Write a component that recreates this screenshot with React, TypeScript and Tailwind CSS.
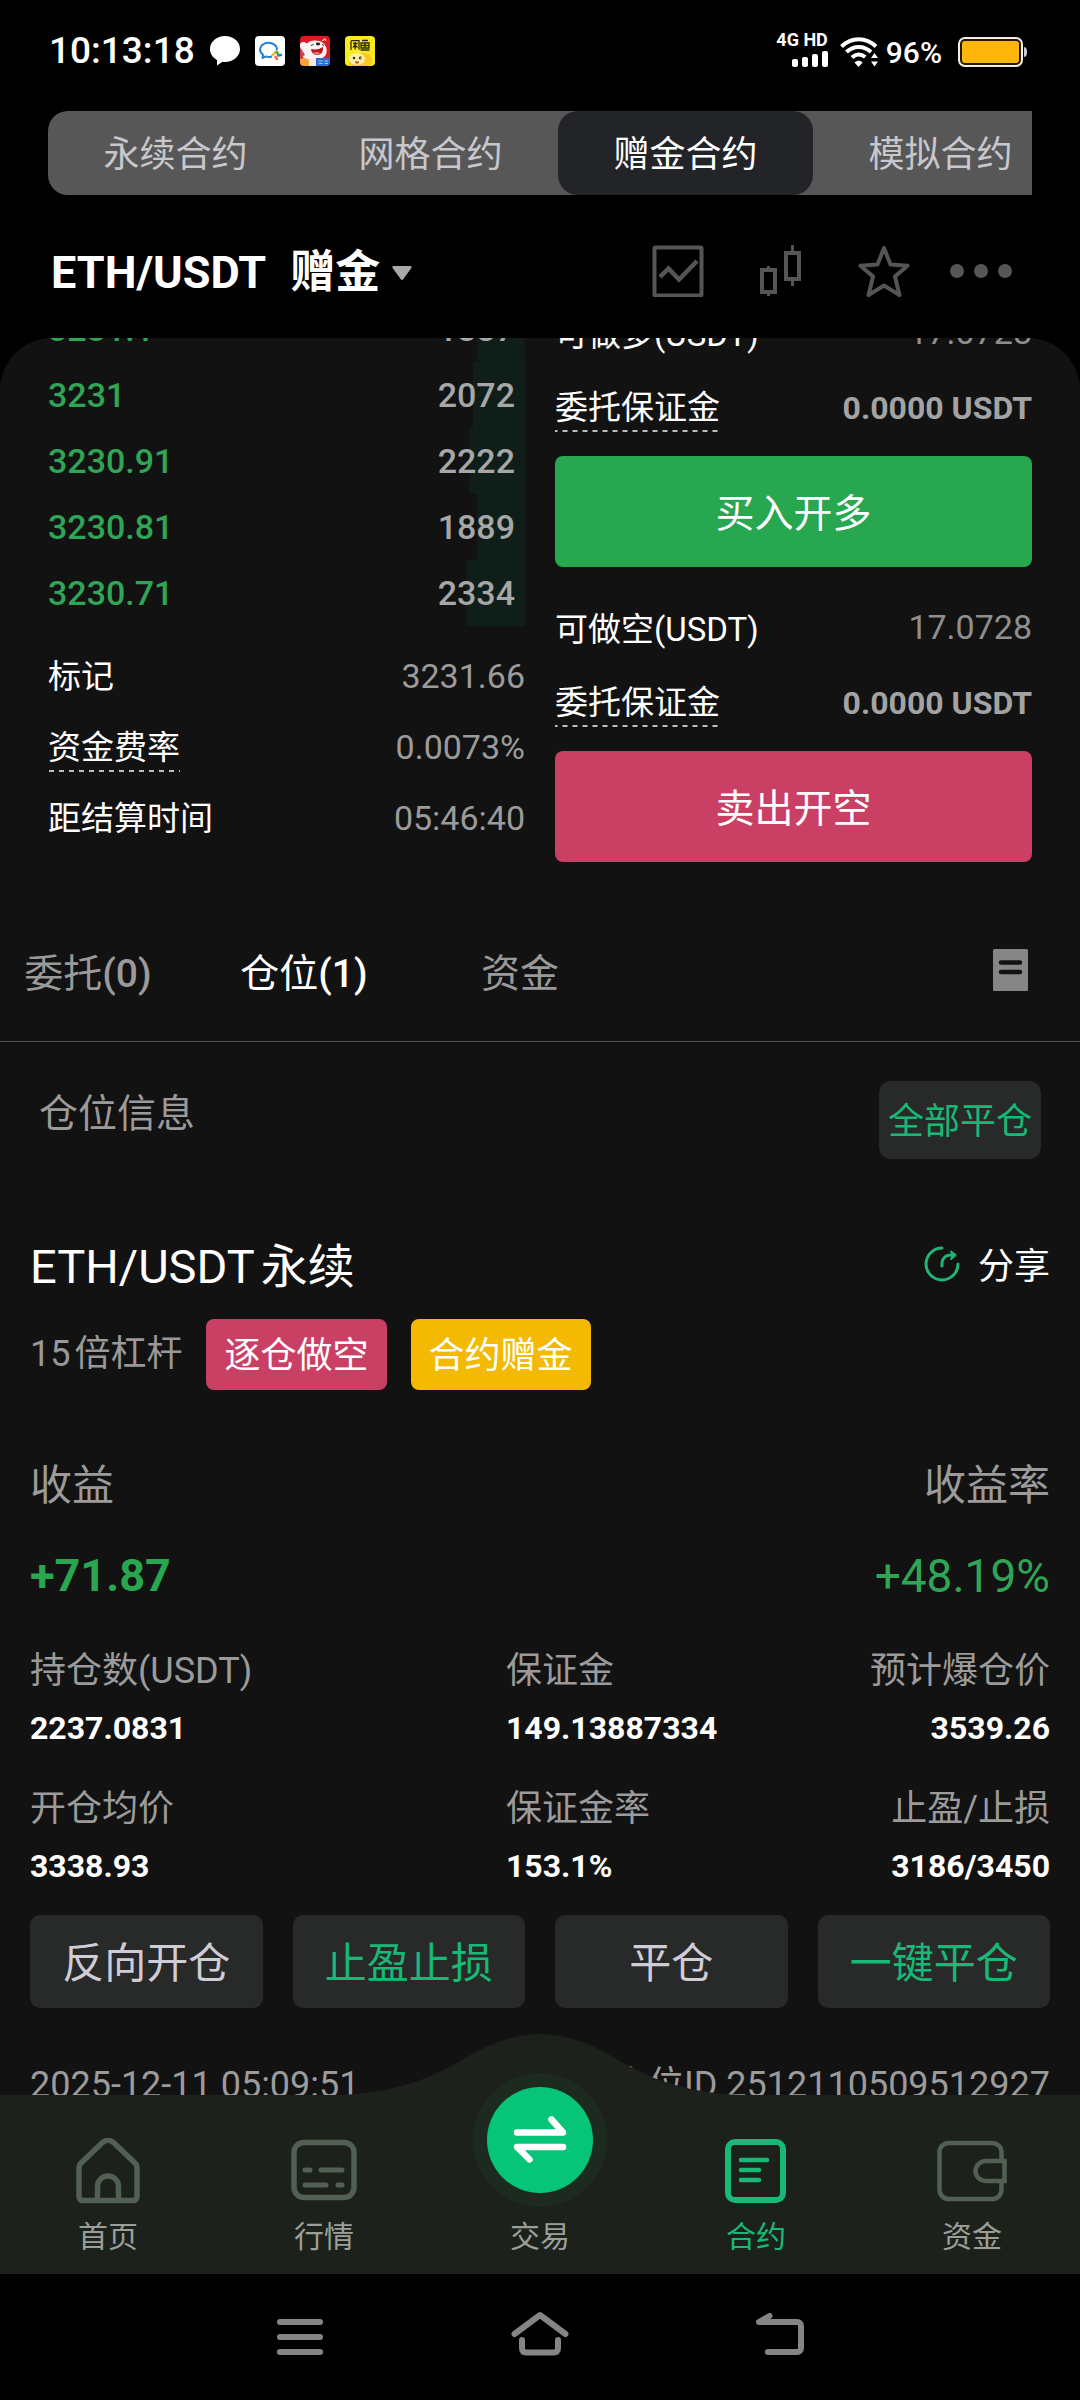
import React from "react";

const contractTabs = ["永续合约", "网格合约", "赠金合约", "模拟合约"];

const bids = [
  { price: "3231.1", amount: 1887 },
  { price: "3231", amount: 2072 },
  { price: "3230.91", amount: 2222 },
  { price: "3230.81", amount: 1889 },
  { price: "3230.71", amount: 2334 },
];

const BOOK_DEPTH = 18900;

const stats = [
  { label: "持仓数(USDT)", value: "2237.0831" },
  { label: "保证金", value: "149.13887334" },
  { label: "预计爆仓价", value: "3539.26" },
  { label: "开仓均价", value: "3338.93" },
  { label: "保证金率", value: "153.1%" },
  { label: "止盈/止损", value: "3186/3450" },
];

const actions = [
  { label: "反向开仓", accent: false },
  { label: "止盈止损", accent: true },
  { label: "平仓", accent: false },
  { label: "一键平仓", accent: true },
];

function ChatBubble() {
  return (
    <svg className="size-[30px]" viewBox="0 0 30 30" aria-hidden="true">
      <path d="M15 0C6.700 0 0 5.600 0 13c0 4.600 2.600 8.500 7 11l0 5.500 5.500-3.800c.8.100 1.700.2 2.500.2 8.300 0 15-5.700 15-13S23.300 0 15 0z" fill="#fff" />
    </svg>
  );
}

function WorkChatIcon() {
  return (
    <svg className="size-[30px]" viewBox="0 0 30 30" aria-hidden="true">
      <rect width="30" height="30" rx="4" fill="#fff" />
      <path d="M17 20.500c-2.200.700-4.300.600-6-.2L7.500 22l.6-3.200C5.500 16.800 4.600 14 5.500 11.500 7 7.500 12 6 16.500 7.300c3.500 1.100 5.600 3.500 5.500 6.700" fill="none" stroke="#2381d2" strokeWidth="2" strokeLinejoin="round" />
      <path d="M17.500 19l3-2.500" stroke="#f6b926" strokeWidth="2.500" strokeLinecap="round" />
      <path d="M21.500 15.500l1.500 2.500" stroke="#47b04b" strokeWidth="2.500" strokeLinecap="round" />
      <path d="M23 19.500l3-.5" stroke="#2381d2" strokeWidth="2.500" strokeLinecap="round" />
      <path d="M20.500 21l1.500 2" stroke="#ee6a3a" strokeWidth="2.500" strokeLinecap="round" />
    </svg>
  );
}

function MascotIcon() {
  return (
    <svg className="size-[30px]" viewBox="0 0 30 30" aria-hidden="true">
      <defs>
        <clipPath id="mascot-clip">
          <rect width="30" height="30" rx="4" />
        </clipPath>
      </defs>
      <g clipPath="url(#mascot-clip)">
        <rect width="30" height="30" fill="#dd1b22" />
        <path d="M0 8C2 5 5 6 7 7.500 10 4 18 3.500 23 7c4 3 5 9 2 13L20 24H6C1 20 0 14 0 8z" fill="#fbf3f3" />
        <path d="M0 11l5 8-5 3z" fill="#c5444a" />
        <path d="M11 13c4 1 8 .5 12-2 .500 5-2 8-6 8-3.500 0-5.500-2.500-6-6z" fill="#b81b24" />
        <path d="M13 17c2-1.500 5-1.500 7 0-2 2-5 2-7 0z" fill="#f27a7a" />
        <ellipse cx="18" cy="8" rx="2.200" ry="1.400" fill="#262222" />
        <path d="M11 9.500l2.500-1M22 8.500l2 1" stroke="#262222" strokeWidth="1" />
        <path d="M22 5l3-2 1 2" stroke="#f4c9a0" strokeWidth="1.200" fill="none" />
        <path d="M0 23c3-2 7-1 9 1v6H0z" fill="#f3a13a" />
        <path d="M9 23h8v7H9z" fill="#f6e9e2" />
        <path d="M16 22h14v8H16z" fill="#2c6fd0" />
        <path d="M18.500 25h4M18.500 27.500h4M24.500 25h3.500M24.500 27.500h3.500" stroke="#9cc4f5" strokeWidth="1" />
      </g>
    </svg>
  );
}

function FishIcon() {
  return (
    <svg className="size-[30px]" viewBox="0 0 30 30" aria-hidden="true">
      <rect width="30" height="30" rx="4" fill="#f9ea1d" />
      <g fill="none" stroke="#2c2a10" strokeWidth="1.300">
        <path d="M6 5v9M6 4.700h8v9M8 7.500h4.500M10.200 6v7.500M8 11.500l2-2.500 2.500 2.500" />
        <path d="M17 4.500h6M16 7h8v5h-8zM16 9.500h8M20 7v5M15.500 14h9" />
      </g>
      <path d="M4 30c-1-7 3-13 11-13 7 0 12 1 12 7 0 3-1 5-3 6z" fill="#fbc723" />
      <ellipse cx="12" cy="23" rx="8" ry="6" fill="#fdf0a6" />
      <circle cx="9" cy="22" r="1.200" fill="#2c2a10" />
      <path d="M14 21.500l2.500-.8M14 22.500l2.500.5" stroke="#2c2a10" strokeWidth="1.100" />
      <path d="M10 25.500h4c0 2.500-3.500 3-4 0z" fill="#c02c1a" />
    </svg>
  );
}

function SignalBars() {
  return (
    <svg className="h-4 w-[36px]" viewBox="0 0 36 16" fill="#fff" aria-hidden="true">
      <rect x="0" y="8" width="6" height="8" rx="2" />
      <rect x="10" y="6" width="6" height="10" rx="2" />
      <rect x="20" y="3" width="6" height="13" rx="2" />
      <rect x="30" y="0" width="6" height="16" rx="2" />
    </svg>
  );
}

function WifiIcon() {
  return (
    <svg className="h-[30px] w-[38px]" viewBox="0 0 38 30" aria-hidden="true">
      <g fill="none" stroke="#fff" strokeWidth="4">
        <path d="M1.500 9.500C11.500-.2 26-.2 36 9.500" />
        <path d="M6.500 15c7-6.800 17.500-6.800 24.500 0" />
        <path d="M12 20.500c4-3.800 9-3.800 13.200-.5" />
      </g>
      <path d="M14.500 25.500c2.500-2.200 5.800-2.200 8.200 0L18.600 30z" fill="#fff" />
      <path d="M34.500 16l3.500 5h-7zM34.500 29.500l3.500-5h-7z" fill="#fff" />
    </svg>
  );
}

function BatteryIcon() {
  return (
    <svg className="h-[30px] w-[70px]" viewBox="0 0 70 30" aria-hidden="true">
      <rect x="1" y="1" width="63" height="28" rx="6" fill="#241a04" stroke="#f2efe8" strokeWidth="2" />
      <rect x="4" y="4" width="57" height="22" rx="3" fill="#ffb60a" />
      <path d="M66 10c2.500.500 3 2 3 5s-.5 4.500-3 5z" fill="#c9ccd6" />
    </svg>
  );
}

function StatusBar() {
  return (
    <header className="flex h-[111px] shrink-0 items-start justify-between pt-[36px] pr-[52px] pl-[49px] text-white">
      <div className="flex items-center gap-[15px]">
        <time className="text-[37px] leading-[30px] font-medium">10:13:18</time>
        <ChatBubble />
        <WorkChatIcon />
        <MascotIcon />
        <FishIcon />
      </div>
      <div className="flex items-center">
        <div className="-mt-1 flex flex-col items-end gap-1">
          <span className="text-[18px] leading-[14px] font-bold">4G HD</span>
          <SignalBars />
        </div>
        <div className="ml-3">
          <WifiIcon />
        </div>
        <span className="ml-2 pt-[2px] text-[30px] leading-[30px] font-medium">96%</span>
        <div className="ml-4">
          <BatteryIcon />
        </div>
      </div>
    </header>
  );
}

function ContractTabs() {
  return (
    <nav className="ml-12 mr-12 flex h-[84px] shrink-0 overflow-hidden rounded-l-[20px] bg-[#575757]">
      {contractTabs.map((tab) => (
        <button
          key={tab}
          type="button"
          className={
            tab === "赠金合约"
              ? "w-[255px] shrink-0 rounded-[20px] bg-[#232428] pt-1 text-[36px] text-white"
              : "w-[255px] shrink-0 pt-1 text-[36px] text-[#c8c7cd]"
          }
        >
          {tab}
        </button>
      ))}
    </nav>
  );
}

function PairHeader() {
  return (
    <div className="flex h-[143px] shrink-0 items-center justify-between pt-[9px] pr-[67px] pl-[51px] text-[#555555]">
      <button type="button" className="flex items-center pt-1 text-[45px] leading-[60px] font-bold text-white">
        <span>ETH/USDT</span>
        <span className="ml-6">赠金</span>
        <svg className="ml-3 h-[14px] w-5" viewBox="0 0 20 14" aria-hidden="true">
          <path d="M2 0h16c1.500 0 2 1 1.200 2.200l-8 11c-.7 1-1.700 1-2.400 0l-8-11C0 1 .5 0 2 0z" fill="#a9a9a9" />
        </svg>
      </button>
      <div className="flex items-center">
        <button type="button" aria-label="走势图">
          <svg className="size-[52px]" viewBox="0 0 52 52" fill="none" stroke="currentColor" aria-hidden="true">
            <rect x="2.500" y="2.500" width="47" height="48" rx="1" strokeWidth="4" />
            <path d="M8 32l8.500-8.500L27 34.500 45 16" strokeWidth="4.500" />
          </svg>
        </button>
        <button type="button" aria-label="K线" className="ml-[56px]">
          <svg className="h-[52px] w-[42px]" viewBox="0 0 42 52" fill="none" stroke="currentColor" strokeWidth="4" aria-hidden="true">
            <rect x="2" y="25" width="13" height="22" />
            <path d="M8.500 21v4M8.500 47v4" strokeWidth="3" />
            <rect x="26" y="8" width="13" height="26" />
            <path d="M32.500 0v8M32.500 34v7" strokeWidth="3" />
          </svg>
        </button>
        <button type="button" aria-label="收藏" className="ml-[56px]">
          <svg className="size-[52px]" viewBox="0 0 52 52" fill="none" stroke="currentColor" strokeWidth="4" strokeLinejoin="round" aria-hidden="true">
            <path d="M26 3l6.500 16.500 17 1.200L37 31.500 41.500 50 26 40.500 10.500 50 15 31.500 2.500 20.700l17-1.200z" />
          </svg>
        </button>
        <button type="button" aria-label="更多" className="ml-10">
          <svg className="h-[14px] w-[63px]" viewBox="0 0 63 14" fill="currentColor" aria-hidden="true">
            <circle cx="7" cy="7" r="7" />
            <circle cx="31" cy="7" r="7" />
            <circle cx="55" cy="7" r="7" />
          </svg>
        </button>
      </div>
    </div>
  );
}

function DashedLabel({ children }: { children: React.ReactNode }) {
  return (
    <span className="inline-block bg-[linear-gradient(90deg,#bdbdbd_50%,transparent_50%)] bg-[length:10px_2px] bg-bottom bg-repeat-x leading-[48px]">
      {children}
    </span>
  );
}

function OrderBook() {
  return (
    <section className="min-w-0 flex-1">
      <table className="w-full text-[34px] font-medium">
        <tbody>
          {bids.map((bid) => (
            <tr
              key={bid.price}
              className="h-[66px] bg-[linear-gradient(#101e1a,#101e1a)] bg-right bg-no-repeat"
              style={{ backgroundSize: `${(bid.amount / BOOK_DEPTH) * 100}% 100%` }}
            >
              <td className="p-0 text-left leading-[40px] text-[#30a556]">{bid.price}</td>
              <td className="p-0 pr-[10px] text-right leading-[40px] text-[#a6a8a7]">{bid.amount}</td>
            </tr>
          ))}
        </tbody>
      </table>
      <dl className="mt-[15px] text-[33px] text-white">
        <div className="flex h-[71px] items-center justify-between">
          <dt>标记</dt>
          <dd className="text-[34px] text-[#9b9b9b]">3231.66</dd>
        </div>
        <div className="flex h-[71px] items-center justify-between">
          <dt>
            <DashedLabel>资金费率</DashedLabel>
          </dt>
          <dd className="text-[34px] text-[#9b9b9b]">0.0073%</dd>
        </div>
        <div className="flex h-[71px] items-center justify-between">
          <dt>距结算时间</dt>
          <dd className="text-[34px] text-[#9b9b9b]">05:46:40</dd>
        </div>
      </dl>
    </section>
  );
}

function OrderSide({ label, action, long }: { label: string; action: string; long: boolean }) {
  return (
    <div>
      <div className="flex h-[66px] items-center justify-between text-[33px] text-white">
        <span>{label}</span>
        <span className="pb-[6px] text-[34px] text-[#8f8f8f]">17.0728</span>
      </div>
      <div className="flex h-[80px] items-center justify-between text-[33px] text-white">
        <DashedLabel>委托保证金</DashedLabel>
        <span className="text-[32px] font-bold text-[#a3a3a3]">0.0000 USDT</span>
      </div>
      <button
        type="button"
        className={
          long
            ? "mt-2 h-[111px] w-full rounded-lg bg-[#26a750] pt-[6px] text-[39px] text-white"
            : "mt-2 h-[111px] w-full rounded-lg bg-[#ca3f64] pt-[6px] text-[39px] text-white"
        }
      >
        {action}
      </button>
    </div>
  );
}

function PositionTabs() {
  return (
    <div className="mt-[42px] flex h-[138px] items-center justify-between border-b border-[#505050] pr-[52px]">
      <div className="-ml-5 flex pt-1 text-[39px] text-[#9a9a9a]">
        <button type="button" className="w-[216px]">
          委托<span className="font-medium">(0)</span>
        </button>
        <button type="button" className="w-[216px] text-white">
          仓位<span className="font-medium">(1)</span>
        </button>
        <button type="button" className="w-[216px]">
          资金
        </button>
      </div>
      <button type="button" aria-label="历史记录" className="pb-[6px]">
        <svg className="h-[42px] w-[35px]" viewBox="0 0 35 42" aria-hidden="true">
          <rect width="35" height="42" rx="1.500" fill="#868686" />
          <path d="M8 13.500h19M8 23h19" stroke="#121212" strokeWidth="4.500" strokeLinecap="round" />
        </svg>
      </button>
    </div>
  );
}

function ShareIcon() {
  return (
    <svg className="size-[36px]" viewBox="0 0 36 36" fill="none" stroke="#1fb574" strokeWidth="3" strokeLinecap="round" aria-hidden="true">
      <path d="M18 2A16 16 0 1 0 34 18" />
      <path d="M18 20v-2c0-5.500 3.500-9 9-9h3" />
      <path d="M27 5.500l4.500 3.500-4.500 4" fill="#1fb574" strokeWidth="2" strokeLinejoin="round" />
    </svg>
  );
}

function PositionCard() {
  return (
    <article className="mt-[78px] px-[30px]">
      <div className="flex h-[60px] items-center justify-between text-white">
        <h2 className="flex gap-[6px] text-[47px] leading-[60px]">
          <span>ETH/USDT</span>
          <span>永续</span>
        </h2>
        <button type="button" className="flex items-start gap-[18px] text-[36px] leading-[50px]">
          <span className="pt-1">
            <ShareIcon />
          </span>
          分享
        </button>
      </div>
      <div className="mt-[22px] flex items-center gap-6 text-[36px] leading-[71px]">
        <span className="flex gap-1 text-[#999999]">
          <span>15</span>
          <span>倍杠杆</span>
        </span>
        <span className="rounded-lg bg-[#ca3f64] px-[18px] pt-1 leading-[67px] text-white">逐仓做空</span>
        <span className="rounded-lg bg-[#f3b903] px-[18px] pt-1 leading-[67px] text-white">合约赠金</span>
      </div>
      <dl className="mt-[66px] flex justify-between">
        <div>
          <dt className="text-[42px] leading-[60px] text-[#9b9b9b]">收益</dt>
          <dd className="mt-[30px] text-[45px] leading-[60px] font-bold text-[#28a750]">+71.87</dd>
        </div>
        <div className="text-right">
          <dt className="text-[42px] leading-[60px] text-[#9b9b9b]">收益率</dt>
          <dd className="mt-[30px] text-[46px] leading-[60px] text-[#30a556]">+48.19%</dd>
        </div>
      </dl>
      <dl className="mt-10 grid grid-cols-[7fr_4fr_4fr] gap-y-9">
        {stats.map((stat, i) => (
          <div key={stat.label} className={i % 3 === 2 ? "text-right" : "text-left"}>
            <dt className="text-[36px] leading-[50px] whitespace-nowrap text-[#9b9b9b]">{stat.label}</dt>
            <dd className="mt-3 text-[32px] leading-[40px] font-bold text-white">{stat.value}</dd>
          </div>
        ))}
      </dl>
      <div className="mt-[29px] grid grid-cols-4 gap-[30px]">
        {actions.map((action) => (
          <button
            key={action.label}
            type="button"
            className={
              action.accent
                ? "h-[93px] rounded-[10px] bg-[#282929] pt-1 text-[42px] text-[#18b877]"
                : "h-[93px] rounded-[10px] bg-[#282929] pt-1 text-[42px] text-[#cfccd6]"
            }
          >
            {action.label}
          </button>
        ))}
      </div>
      <div className="mt-[52px] flex justify-between text-[36px] leading-[50px] whitespace-nowrap text-[#9b9b9b]">
        <time>2025-12-11 05:09:51</time>
        <span>仓位ID 2512110509512927</span>
      </div>
    </article>
  );
}

function HomeIcon() {
  return (
    <svg className="size-[66px]" viewBox="0 0 66 66" fill="none" stroke="currentColor" strokeWidth="5.500" aria-hidden="true">
      <path d="M4 29.500v29c0 2.500 1.500 4 4 4h50c2.500 0 4-1.500 4-4v-29c0-1.600-.6-3-1.800-4.200L38.500 4.500c-3.200-2.800-7.800-2.800-11 0L5.800 25.300C4.600 26.500 4 27.900 4 29.500z" />
      <path d="M22.500 62V49c0-6.500 4.500-11 10.500-11s10.500 4.500 10.500 11v13" />
    </svg>
  );
}

function MarketIcon() {
  return (
    <svg className="size-[66px]" viewBox="0 0 66 66" fill="none" stroke="currentColor" strokeWidth="5.500" aria-hidden="true">
      <rect x="3" y="4.500" width="60" height="55" rx="10" />
      <path d="M14 32h5M30 32h21M14 47h21M47 47h4" strokeLinecap="round" strokeWidth="5" />
    </svg>
  );
}

function ContractIcon() {
  return (
    <svg className="size-[66px]" viewBox="0 0 66 66" fill="none" stroke="currentColor" strokeWidth="6" aria-hidden="true">
      <rect x="5" y="4" width="55" height="58" rx="7" />
      <path d="M18 22h26M18 32h18M18 42h18" strokeLinecap="round" strokeWidth="4.500" />
    </svg>
  );
}

function WalletIcon() {
  return (
    <svg className="h-[66px] w-[70px]" viewBox="0 0 70 66" fill="none" stroke="currentColor" strokeWidth="4.500" aria-hidden="true">
      <path d="M64.500 22v-7.500c0-5.500-4-9.500-9.500-9.500H12c-5.500 0-9.500 4-9.500 9.500v37c0 5.500 4 9.500 9.500 9.500h43c5.500 0 9.500-4 9.500-9.500V44" />
      <path d="M67.500 23H49.500c-6.200 0-11 4.200-11 10s4.800 10 11 10h18z" />
    </svg>
  );
}

function BottomNav() {
  const item = "flex flex-1 flex-col items-center gap-2 pt-[43px] text-[30px] leading-[50px]";
  return (
    <nav className="relative flex h-[179px] shrink-0 bg-[#1c211c] text-[#9a9f99]">
      <svg className="absolute -top-[61px] left-1/2 h-[62px] w-[400px] -translate-x-1/2" viewBox="0 0 400 62" aria-hidden="true">
        <path d="M0 62V61C75 58 112 31 125 24 150 9 175 0 200 0s50 9 75 24c13 7 50 34 125 37v1z" fill="#1c211c" />
      </svg>
      <a href="#home" className={item}>
        <span className="text-[#525f53]">
          <HomeIcon />
        </span>
        首页
      </a>
      <a href="#market" className={item}>
        <span className="text-[#525f53]">
          <MarketIcon />
        </span>
        行情
      </a>
      <a href="#trade" className="relative flex flex-1 flex-col items-center pt-[117px] text-[30px] leading-[50px]">
        <svg className="absolute -top-[22px] left-1/2 size-[134px] -translate-x-1/2" viewBox="0 0 134 134" aria-hidden="true">
          <circle cx="67" cy="67" r="67" fill="#1d2a1f" />
          <circle cx="67" cy="67" r="53" fill="#06c478" />
          <g fill="none" stroke="#fff" strokeWidth="6.500" strokeLinecap="round" strokeLinejoin="round">
            <path d="M44 59.500h46L78.500 46.500" />
            <path d="M90 74H44l12.500 12.500" />
          </g>
        </svg>
        交易
      </a>
      <a href="#contract" aria-current="page" className="flex flex-1 flex-col items-center gap-2 pt-[43px] text-[30px] leading-[50px] text-[#18b877]">
        <ContractIcon />
        合约
      </a>
      <a href="#assets" className={item}>
        <span className="text-[#525f53]">
          <WalletIcon />
        </span>
        资金
      </a>
    </nav>
  );
}

function SystemNav() {
  return (
    <footer className="flex h-[126px] shrink-0 items-center justify-center gap-[180px] bg-black text-[#858585]">
      <button type="button" aria-label="最近任务">
        <svg className="size-[60px]" viewBox="0 0 60 60" fill="none" stroke="currentColor" strokeWidth="6" strokeLinecap="round" aria-hidden="true">
          <path d="M10 15h40M10 30h40M10 45h40" />
        </svg>
      </button>
      <button type="button" aria-label="主屏幕">
        <svg className="size-[60px]" viewBox="0 0 60 60" fill="none" stroke="currentColor" strokeWidth="6" strokeLinecap="round" strokeLinejoin="round" aria-hidden="true">
          <path d="M4.500 27L30 8l25.500 19" />
          <path d="M12 33v8c0 3 1.500 4.500 4.500 4.500h27c3 0 4.500-1.500 4.500-4.500v-8" />
        </svg>
      </button>
      <button type="button" aria-label="返回">
        <svg className="size-[60px]" viewBox="0 0 60 60" fill="none" stroke="currentColor" strokeWidth="6" strokeLinecap="round" strokeLinejoin="round" aria-hidden="true">
          <path d="M19.500 9L9 15h38c2.500 0 4 1.500 4 4v22c0 2.500-1.500 4-4 4H18" />
        </svg>
      </button>
    </footer>
  );
}

export default function App() {
  return (
    <div className="flex h-screen flex-col overflow-hidden bg-black font-[Roboto,'Noto_Sans_CJK_SC',sans-serif]">
      <StatusBar />
      <ContractTabs />
      <PairHeader />
      <main className="min-h-0 flex-1 overflow-hidden rounded-t-[52px] bg-[#121212]">
        <div className="-mt-[42px] flex gap-[30px] px-12">
          <OrderBook />
          <section className="flex min-w-0 flex-1 flex-col gap-[30px] pt-[6px]">
            <OrderSide label="可做多(USDT)" action="买入开多" long />
            <OrderSide label="可做空(USDT)" action="卖出开空" long={false} />
          </section>
        </div>
        <PositionTabs />
        <div className="flex items-start justify-between px-[39px] pt-[39px]">
          <h1 className="text-[39px] leading-[66px] text-[#9b9b9b]">仓位信息</h1>
          <button type="button" className="h-[78px] rounded-xl bg-[#282929] px-[9px] pt-1 text-[36px] text-[#18b877]">
            全部平仓
          </button>
        </div>
        <PositionCard />
      </main>
      <BottomNav />
      <SystemNav />
    </div>
  );
}
